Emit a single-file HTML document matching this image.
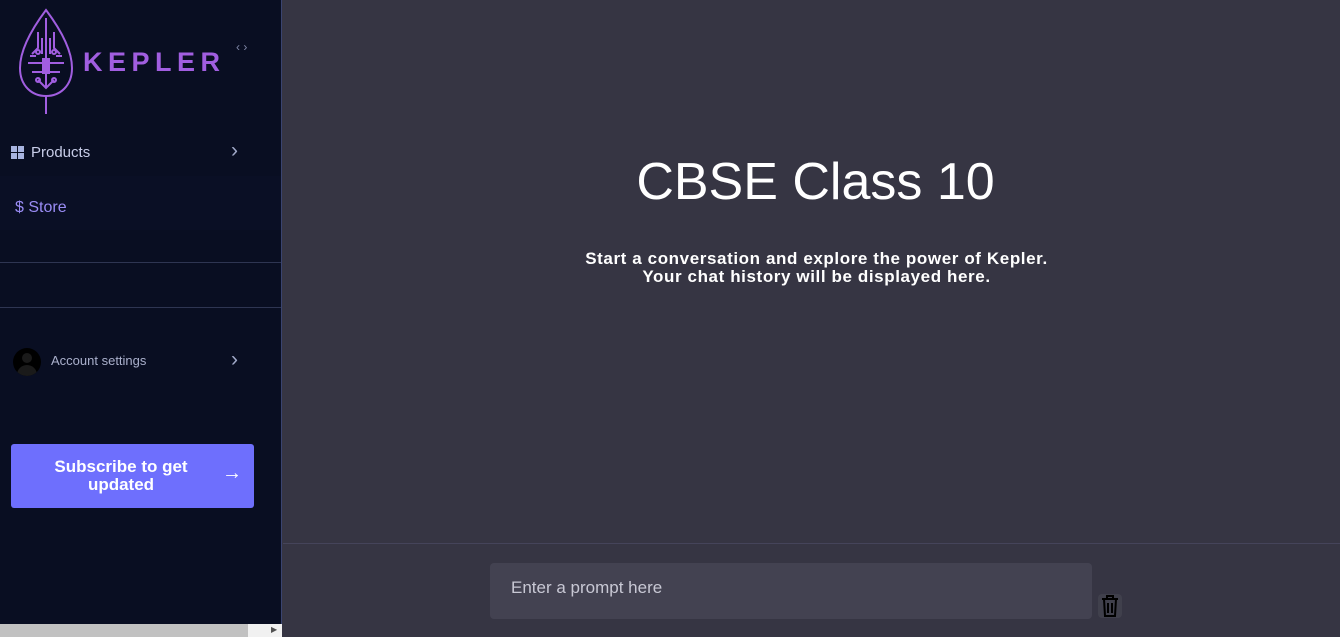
<!DOCTYPE html>
<html><head><style>
*{margin:0;padding:0;box-sizing:border-box}
body{width:1340px;height:637px;overflow:hidden;background:#363543;font-family:"Liberation Sans",sans-serif;position:relative}
.sb{position:absolute;left:0;top:0;width:282px;height:637px;background:#090e22;border-right:1px solid #3a4470}
.t{position:absolute;white-space:nowrap}
</style></head><body>
<div class="sb">
<svg class="t" style="left:16px;top:8px" width="60" height="108" viewBox="0 0 60 108">
<g fill="none" stroke="#a15ee0" stroke-width="2">
<path d="M30 2 C18 18 4 40 4 60 C4 78 16 88 30 88 C44 88 56 78 56 60 C56 40 42 18 30 2Z"/>
<path d="M30 88 V106"/>
<path d="M30 10 V80 M22 24 V40 l-6 6 M38 24 V40 l6 6 M12 55 H48 M16 64 H44 M26 30 V46 M34 30 V46 M22 72 l8 8 l8 -8 M14 48 h6 M40 48 h6"/>
<circle cx="22" cy="44" r="2"/><circle cx="38" cy="44" r="2"/><circle cx="22" cy="72" r="2"/><circle cx="38" cy="72" r="2"/>
</g>
<rect x="26" y="50" width="8" height="16" fill="#a15ee0"/>
</svg>
<div class="t" style="left:83px;top:47px;font-size:27px;color:#a15ee0;letter-spacing:5.5px;font-weight:bold">KEPLER</div>
<div class="t" style="left:236px;top:40px;font-size:12px;color:#8088a8">‹ ›</div>
<div class="t" style="left:11px;top:146px;width:13px;height:13px;display:grid;grid-template-columns:6px 6px;gap:1px"><i style="background:#a8b4e0"></i><i style="background:#a8b4e0"></i><i style="background:#a8b4e0"></i><i style="background:#a8b4e0"></i></div>
<div class="t" style="left:31px;top:144px;font-size:15px;color:#c8cde8">Products</div>
<div class="t" style="left:231px;top:139px;font-size:21px;color:#a0a8c8">›</div>
<div style="position:absolute;left:0;top:176px;width:281px;height:54px;background:#0a0f25"></div>
<div class="t" style="left:15px;top:199px;font-size:16px;color:#9a8cf5">$ Store</div>
<div style="position:absolute;left:0;top:262px;width:281px;height:1px;background:#2e3552"></div>
<div style="position:absolute;left:0;top:307px;width:281px;height:1px;background:#2e3552"></div>
<div class="t" style="left:13px;top:348px;width:28px;height:28px;border-radius:50%;background:#000;overflow:hidden"><div style="position:absolute;left:9px;top:5px;width:10px;height:10px;border-radius:50%;background:#1a1a1a"></div><div style="position:absolute;left:4px;top:17px;width:20px;height:14px;border-radius:10px 10px 0 0;background:#1a1a1a"></div></div>
<div class="t" style="left:51px;top:353px;font-size:13px;color:#aab0cc">Account settings</div>
<div class="t" style="left:231px;top:348px;font-size:21px;color:#a0a8c8">›</div>
<div style="position:absolute;left:11px;top:444px;width:243px;height:64px;background:#6e6ffd;border-radius:3px"></div>
<div class="t" style="left:31px;top:458px;width:180px;text-align:center;font-size:17px;font-weight:bold;color:#fff;line-height:18px;white-space:normal">Subscribe to get updated</div>
<div class="t" style="left:222px;top:462px;font-size:20px;color:#fff">→</div>
<div style="position:absolute;left:0;top:624px;width:248px;height:13px;background:#c1c1c1"></div>
<div style="position:absolute;left:248px;top:624px;width:34px;height:13px;background:#f1f1f1"></div>
<div class="t" style="left:271px;top:625px;font-size:8px;color:#505050">▶</div>
</div>
<div class="t" style="left:283px;top:152px;width:1065px;text-align:center;font-size:52px;color:#fff">CBSE Class 10</div>
<div class="t" style="left:283px;top:250px;width:1067px;text-align:center;font-size:17px;font-weight:bold;color:#fff;line-height:18px;letter-spacing:0.6px">Start a conversation and explore the power of Kepler.<br>Your chat history will be displayed here.</div>
<div style="position:absolute;left:283px;top:543px;width:1057px;height:1px;background:#45445a"></div>
<div style="position:absolute;left:490px;top:563px;width:602px;height:56px;background:#434251;border-radius:4px"></div>
<div class="t" style="left:511px;top:578px;font-size:17px;color:#c8c8d4">Enter a prompt here</div>
<div style="position:absolute;left:1098px;top:594px;width:24px;height:24px;background:#40404c;border-radius:4px"></div>
<svg class="t" style="left:1101px;top:595px" width="18" height="22" viewBox="0 0 18 22"><g fill="none" stroke="#000" stroke-width="2"><path d="M1 4H17 M6 4V1H12V4 M3 4L4 21H14L15 4 M7 8V18 M11 8V18"/></g></svg>
</body></html>
